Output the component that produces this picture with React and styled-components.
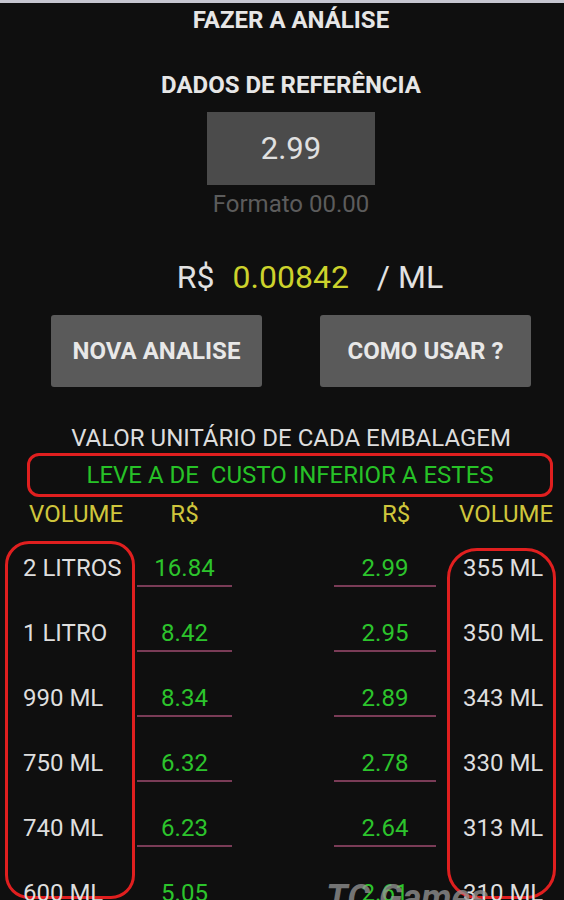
import React from 'react'
import styled, { createGlobalStyle } from 'styled-components'

const GlobalStyle = createGlobalStyle`
  html, body {
    margin: 0;
    padding: 0;
    background: #0f0f0f;
    overflow: hidden;
  }
  body {
    font-family: Roboto, "Liberation Sans", Arial, sans-serif;
  }
`

const Screen = styled.main`
  position: relative;
  width: 564px;
  min-height: 900px;
  box-sizing: border-box;
  border-top: 3px solid #c6c6d0;
  background: #0f0f0f;
  color: #e2e2e2;
`

const Top = styled.section`
  display: flex;
  flex-direction: column;
  align-items: center;
  padding-left: 18px;
`

const Heading = styled.h1`
  margin: ${(p) => p.$mt}px 0 0;
  font-size: 24px;
  line-height: 28px;
  font-weight: 700;
  color: #e6e6e6;
`

const ValueBox = styled.div`
  margin-top: 13px;
  width: 168px;
  height: 73px;
  background: #4b4b4b;
  display: flex;
  align-items: center;
  justify-content: center;
  font-size: 31px;
  color: #e0e0e0;
`

const Hint = styled.div`
  margin-top: 5px;
  font-size: 24px;
  line-height: 28px;
  color: #5c5c5c;
`

const PriceLine = styled.div`
  margin-top: 41px;
  margin-left: 38px;
  display: flex;
  align-items: baseline;
  gap: 18px;
  font-size: 32px;
  line-height: 36px;
`

const Amount = styled.span`
  color: ${(p) => (p.$accent ? '#ccd22c' : '#e2e2e2')};
  margin-right: ${(p) => (p.$accent ? 10 : 0)}px;
`

const ButtonRow = styled.div`
  margin-top: 20px;
  display: flex;
  gap: 58px;
`

const ActionButton = styled.button`
  width: 211px;
  height: 72px;
  border: 0;
  border-radius: 3px;
  background: #5a5a5a;
  color: #e8e8e8;
  font-family: inherit;
  font-size: 24px;
  font-weight: 700;
  padding: 0;
`

const Caption = styled.div`
  margin-top: 37px;
  font-size: 24px;
  line-height: 28px;
  color: #dddddd;
`

const Callout = styled.div`
  margin: 1px 11px 0 27px;
  height: 44px;
  box-sizing: border-box;
  border: 3px solid #e01f1f;
  border-radius: 12px;
  display: flex;
  align-items: center;
  justify-content: center;
  font-size: 24px;
  color: #27c227;
  white-space: pre;
`

const Grid = styled.div`
  display: grid;
  grid-template-columns: 130px 97px 1fr 113px 109px;
  padding: 0 8px 0 5px;
  margin-top: ${(p) => p.$mt}px;
`

const HeadCell = styled.div`
  grid-column: ${(p) => p.$col};
  padding-left: ${(p) => p.$pad || 0}px;
  text-align: ${(p) => p.$align || 'left'};
  font-size: 24px;
  line-height: 28px;
  color: #cfc63c;
`

const Body = styled(Grid)`
  position: relative;
  align-items: start;
`

const VolumeBox = styled.div`
  grid-column: ${(p) => p.$col};
  margin-top: ${(p) => p.$offset}px;
  height: ${(p) => 358 - p.$offset}px;
  box-sizing: border-box;
  border: 3px solid #e01f1f;
  border-radius: ${(p) => p.$radius}px;
  padding-left: ${(p) => p.$pad}px;
  & > div:first-child {
    margin-top: -${(p) => p.$offset}px;
  }
`

const VolumeItem = styled.div`
  height: 65px;
  padding-top: 10px;
  box-sizing: border-box;
  font-size: 24px;
  line-height: 28px;
  color: #dedede;
  white-space: nowrap;
`

const PriceColumn = styled.div`
  grid-column: ${(p) => p.$col};
  justify-self: ${(p) => p.$justify};
  width: ${(p) => p.$width}px;
`

const PriceCell = styled.div`
  height: 65px;
  padding-top: 13px;
  box-sizing: border-box;
  text-align: center;
`

const PriceText = styled.div`
  font-size: 24px;
  line-height: 28px;
  color: #2cc42c;
`

const Rule = styled.div`
  margin-top: 3px;
  height: 2px;
  background: ${(p) => (p.$hidden ? 'transparent' : '#7a3c57')};
`

const Watermark = styled.div`
  position: absolute;
  left: 326px;
  top: 336px;
  font-size: 36px;
  font-weight: 700;
  font-style: italic;
  color: rgba(150, 150, 150, 0.75);
  white-space: nowrap;
  pointer-events: none;
`

const leftRows = [
  ['2 LITROS', '16.84'],
  ['1 LITRO', '8.42'],
  ['990 ML', '8.34'],
  ['750 ML', '6.32'],
  ['740 ML', '6.23'],
  ['600 ML', '5.05'],
]

const rightRows = [
  ['2.99', '355 ML'],
  ['2.95', '350 ML'],
  ['2.89', '343 ML'],
  ['2.78', '330 ML'],
  ['2.64', '313 ML'],
  ['2.61', '310 ML'],
]

const Prices = ({ items, col, justify, width }) => (
  <PriceColumn $col={col} $justify={justify} $width={width}>
    {items.map((v, i) => (
      <PriceCell key={v + i}>
        <PriceText>{v}</PriceText>
        <Rule $hidden={i === items.length - 1} />
      </PriceCell>
    ))}
  </PriceColumn>
)

export default function App() {
  return (
    <>
      <GlobalStyle />
      <Screen>
        <Top>
          <Heading $mt={3}>FAZER A ANÁLISE</Heading>
          <Heading $mt={37}>DADOS DE REFERÊNCIA</Heading>
          <ValueBox>2.99</ValueBox>
          <Hint>Formato 00.00</Hint>
          <PriceLine>
            <Amount>R$</Amount>
            <Amount $accent>0.00842</Amount>
            <Amount>/ ML</Amount>
          </PriceLine>
          <ButtonRow>
            <ActionButton>NOVA ANALISE</ActionButton>
            <ActionButton>COMO USAR ?</ActionButton>
          </ButtonRow>
          <Caption>VALOR UNITÁRIO DE CADA EMBALAGEM</Caption>
        </Top>

        <Callout>LEVE A DE  CUSTO INFERIOR A ESTES</Callout>

        <Grid $mt={3}>
          <HeadCell $col={1} $pad={24}>VOLUME</HeadCell>
          <HeadCell $col={2} $align="center" $pad={2}>R$</HeadCell>
          <HeadCell $col={4} $pad={48}>R$</HeadCell>
          <HeadCell $col={5} $pad={12}>VOLUME</HeadCell>
        </Grid>

        <Body $mt={13}>
          <VolumeBox $col={1} $offset={0} $radius={24} $pad={15}>
            {leftRows.map(([vol]) => (
              <VolumeItem key={vol}>{vol}</VolumeItem>
            ))}
          </VolumeBox>
          <Prices items={leftRows.map((r) => r[1])} col={2} justify="end" width={95} />
          <Prices items={rightRows.map((r) => r[0])} col={4} justify="start" width={102} />
          <VolumeBox $col={5} $offset={7} $radius={30} $pad={13}>
            {rightRows.map(([, vol]) => (
              <VolumeItem key={vol}>{vol}</VolumeItem>
            ))}
          </VolumeBox>
          <Watermark>TC Games</Watermark>
        </Body>
      </Screen>
    </>
  )
}
